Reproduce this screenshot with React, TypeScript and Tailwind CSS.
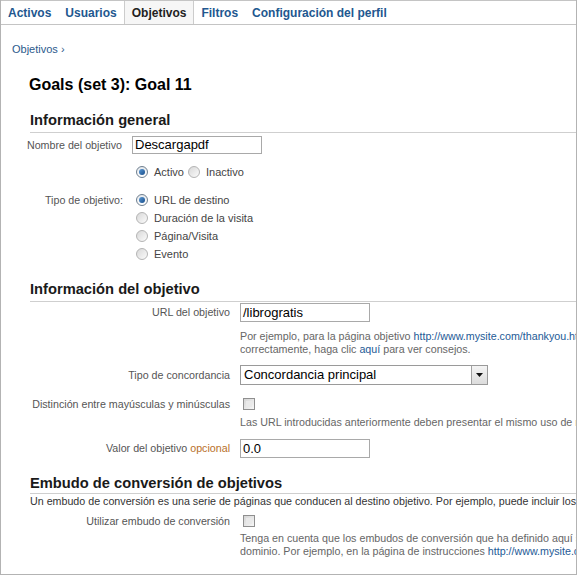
import React from "react";

const tabs = [
  { name: "Activos" },
  { name: "Usuarios" },
  { name: "Objetivos", active: true },
  { name: "Filtros" },
  { name: "Configuración del perfil" },
];

const Radio = ({ checked }: { checked?: boolean }) => (
  <span
    className={`ml-[4px] w-[12px] h-[12px] rounded-full border flex items-center justify-center shrink-0 ${
      checked
        ? "border-[#6f7f8f] bg-gradient-to-b from-[#e4e8ec] to-[#ffffff]"
        : "border-[#b4b4b4] bg-gradient-to-br from-[#d8d8d8] to-[#fbfbfb]"
    }`}
  >
    {checked && (
      <span className="w-[6px] h-[6px] rounded-full bg-gradient-to-br from-[#5b9ad6] to-[#164d8a]" />
    )}
  </span>
);

const Checkbox = () => (
  <span className="ml-[3px] w-[12px] h-[12px] border border-[#8f8f8f] bg-gradient-to-br from-[#d5d5d5] to-[#f7f7f7] flex items-center justify-center shrink-0">
    <span className="w-[6px] h-[6px] bg-[#e9e9e9]" />
  </span>
);

const Heading = ({ title, className }: { title: string; className: string }) => (
  <div
    className={`ml-[29px] border-b border-[#cfcfcf] text-[14.7px] leading-[17px] font-bold text-[#1a1a1a] ${className}`}
  >
    {title}
  </div>
);

const Link = ({ children }: { children: React.ReactNode }) => (
  <span className="text-[#245a96]">{children}</span>
);

export default function App() {
  return (
    <div className="w-[577px] h-[575px] overflow-hidden bg-white border-l border-r border-b border-[#b3b3b3] font-['Liberation_Sans',Arial,sans-serif]">
      {/* Tabs */}
      <div className="h-[25px] flex border-t border-b border-[#c4c4c4] whitespace-nowrap">
        {tabs.map((tab) => (
          <div
            key={tab.name}
            className={`px-[7px] flex items-center text-[12px] font-bold ${
              tab.active
                ? "bg-[#f6f6f6] border-l border-r border-[#cccccc] text-[#222]"
                : "text-[#22578f]"
            }`}
          >
            {tab.name}
          </div>
        ))}
      </div>

      {/* Breadcrumb */}
      <div className="mt-[18px] pl-[11px] text-[11px] leading-[13px] text-[#2b5a8c]">
        Objetivos ›
      </div>

      {/* Title */}
      <div className="mt-[19px] pl-[28px] text-[16px] leading-[19px] font-bold text-black">
        Goals (set 3): Goal 11
      </div>

      {/* Información general */}
      <Heading title="Información general" className="mt-[18px] pb-[3px]" />

      <div className="mt-[3px] flex items-center">
        <div className="ml-[29px] w-[92px] flex justify-end text-[10.7px] text-[#555] whitespace-nowrap">
          Nombre del objetivo
        </div>
        <div className="ml-[10px] w-[130px] h-[18px] border border-[#a9a9a9] flex items-center px-[2px] text-[13px] text-black">
          Descargapdf
        </div>
      </div>

      <div className="mt-[9px] ml-[131px] flex items-center h-[18px] text-[11px] text-[#444]">
        <Radio checked />
        <span className="ml-[6px]">Activo</span>
        <Radio />
        <span className="ml-[6px]">Inactivo</span>
      </div>

      <div className="mt-[10px] flex">
        <div className="ml-[29px] w-[93px] h-[18px] flex items-center justify-end text-[10.7px] text-[#555] whitespace-nowrap">
          Tipo de objetivo:
        </div>
        <div className="ml-[9px] flex flex-col text-[11px] text-[#444]">
          {[
            { label: "URL de destino", checked: true },
            { label: "Duración de la visita" },
            { label: "Página/Visita" },
            { label: "Evento" },
          ].map((o) => (
            <div key={o.label} className="h-[18px] flex items-center">
              <Radio checked={o.checked} />
              <span className="ml-[6px]">{o.label}</span>
            </div>
          ))}
        </div>
      </div>

      {/* Información del objetivo */}
      <Heading title="Información del objetivo" className="mt-[18px] pb-[3px]" />

      <div className="mt-[1px] flex items-center">
        <div className="ml-[29px] w-[200px] text-right text-[10.7px] text-[#555]">
          URL del objetivo
        </div>
        <div className="ml-[10px] w-[130px] h-[19px] border border-[#a9a9a9] flex items-center px-[2px] text-[13px] text-black">
          /librogratis
        </div>
      </div>

      <div className="mt-[8px] ml-[239px] text-[10.7px] leading-[13px] text-[#666] whitespace-nowrap">
        <div>
          Por ejemplo, para la página objetivo{" "}
          <Link>http://www.mysite.com/thankyou.html</Link>, introduzca /thankyou.html
        </div>
        <div>
          correctamente, haga clic <Link>aquí</Link> para ver consejos.
        </div>
      </div>

      <div className="mt-[9px] flex items-center">
        <div className="ml-[29px] w-[200px] text-right text-[10.7px] text-[#555]">
          Tipo de concordancia
        </div>
        <div className="ml-[10px] w-[248px] h-[20px] border border-[#9a9a9a] flex items-center justify-between text-[13px] text-black">
          <span className="pl-[3px]">Concordancia principal</span>
          <span className="w-[16px] h-full border-l border-[#a0a0a0] bg-gradient-to-b from-[#f4f4f4] to-[#dcdcdc] flex items-center justify-center">
            <svg width="7" height="4" viewBox="0 0 7 4">
              <path d="M0 0H7L3.5 4Z" fill="#111" />
            </svg>
          </span>
        </div>
      </div>

      <div className="mt-[11px] flex items-center h-[16px]">
        <div className="ml-[29px] w-[200px] flex justify-end text-[10.7px] text-[#555] whitespace-nowrap">
          Distinción entre mayúsculas y minúsculas
        </div>
        <div className="ml-[10px]">
          <Checkbox />
        </div>
      </div>

      <div className="mt-[4px] ml-[239px] text-[10.7px] leading-[13px] text-[#666] whitespace-nowrap">
        Las URL introducidas anteriormente deben presentar el mismo uso de mayúsculas y minúsculas
      </div>

      <div className="mt-[10px] flex items-center">
        <div className="ml-[29px] w-[200px] text-right text-[10.7px] text-[#555]">
          Valor del objetivo <span className="text-[#b8702a]">opcional</span>
        </div>
        <div className="ml-[10px] w-[130px] h-[19px] border border-[#a9a9a9] flex items-center px-[2px] text-[13px] text-black">
          0.0
        </div>
      </div>

      {/* Embudo */}
      <Heading title="Embudo de conversión de objetivos" className="mt-[17px] pb-[1px]" />

      <div className="mt-[1px] ml-[29px] text-[10.7px] leading-[13px] text-[#333] whitespace-nowrap">
        Un embudo de conversión es una serie de páginas que conducen al destino objetivo. Por ejemplo, puede incluir los pasos
      </div>

      <div className="mt-[5px] flex items-center h-[16px]">
        <div className="ml-[29px] w-[200px] text-right text-[10.7px] text-[#555]">
          Utilizar embudo de conversión
        </div>
        <div className="ml-[10px]">
          <Checkbox />
        </div>
      </div>

      <div className="mt-[3px] ml-[239px] text-[10.7px] leading-[13px] text-[#666] whitespace-nowrap">
        <div>Tenga en cuenta que los embudos de conversión que ha definido aquí solo se aplican</div>
        <div>
          dominio. Por ejemplo, en la página de instrucciones <Link>http://www.mysite.com/step1.html</Link>
        </div>
      </div>
    </div>
  );
}
